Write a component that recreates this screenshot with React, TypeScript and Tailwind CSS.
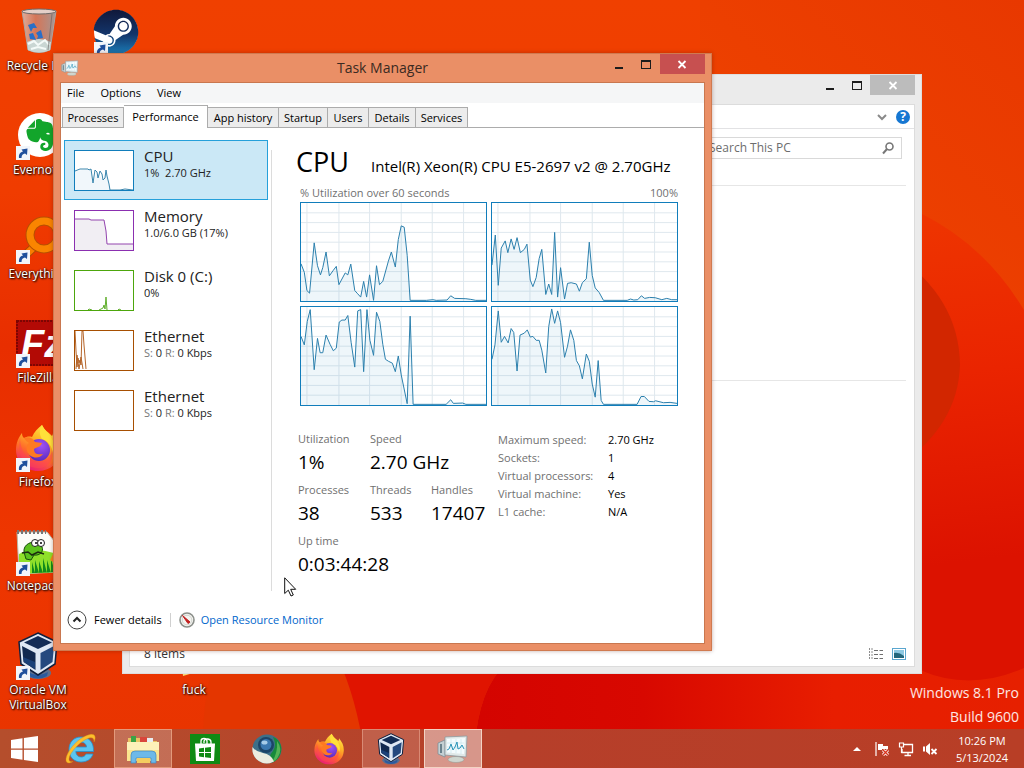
import { useState } from "react";
import type { ReactNode } from "react";
import { FaSteam } from "react-icons/fa";
import { SiEvernote } from "react-icons/si";

/* ---------- Icons ---------- */

function RecycleIcon() {
  return (
    <svg viewBox="0 0 48 48" className="size-12" aria-hidden="true">
      <defs>
        <linearGradient id="bin" x1="0" x2="1">
          <stop offset="0" stopColor="#d9d2cf" stopOpacity=".75" />
          <stop offset=".4" stopColor="#c98d7e" stopOpacity=".7" />
          <stop offset="1" stopColor="#9aa1a5" stopOpacity=".9" />
        </linearGradient>
      </defs>
      <path d="M8 3 L42 3 L36 42 Q25 47 14 42 Z" fill="url(#bin)" stroke="#a9a5a3" />
      <path d="M13 34 Q25 28 37 34 L36 42 Q25 47 14 42 Z" fill="#c9d6d3" />
      <path d="M14 36 L20 33 L24 37 L31 32 L35 37 M17 41 L24 39 L32 41" stroke="#f4faf8" strokeWidth="2" fill="none" />
      <path d="M14 17 L20 15 L23 20 L19 20 L17 24 Z M22 25 L27 22 L29 30 L23 31 L24 28 Z M15 26 L19 25 L22 32 L16 31 Z" fill="#2a6fc8" />
      <ellipse cx="25" cy="3.5" rx="17" ry="2.5" fill="#e4cfc8" stroke="#6f6a68" />
      <path d="M38 6 L34 42" stroke="#63605f" strokeWidth="1" opacity=".6" />
    </svg>
  );
}

function SteamIcon() {
  return (
    <svg viewBox="0 0 48 48" className="size-12" aria-hidden="true">
      <defs>
        <linearGradient id="steam" x1="0" x2="0" y1="0" y2="1">
          <stop offset="0" stopColor="#10183a" />
          <stop offset=".55" stopColor="#13356a" />
          <stop offset="1" stopColor="#1b7db8" />
        </linearGradient>
      </defs>
      <circle cx="24" cy="24" r="22" fill="#fff" />
      <FaSteam x={1} y={1} size={46} fill="url(#steam)" />
    </svg>
  );
}

function EvernoteIcon() {
  return (
    <svg viewBox="0 0 48 48" className="size-12" aria-hidden="true">
      <circle cx="26" cy="23" r="22" fill="#fff" />
      <SiEvernote x={10} y={7} size={32} fill="#12a52b" />
    </svg>
  );
}

function EverythingIcon() {
  return (
    <svg viewBox="0 0 48 48" className="size-12" aria-hidden="true">
      <path d="M20 31 L6 44" stroke="#b04a00" strokeWidth="9" strokeLinecap="round" />
      <path d="M20 31 L6 44" stroke="#fa7d00" strokeWidth="7" strokeLinecap="round" />
      <circle cx="30" cy="19" r="14" fill="none" stroke="#b85000" strokeWidth="9" />
      <circle cx="30" cy="19" r="14" fill="none" stroke="#fa8500" strokeWidth="7" />
    </svg>
  );
}

function FileZillaIcon() {
  return (
    <svg viewBox="0 0 48 48" className="size-12" aria-hidden="true">
      <rect x="2" width="46" height="46" fill="#b30a05" />
      <rect x="3" y="1" width="44" height="44" fill="none" stroke="#7d0502" strokeWidth="2" strokeDasharray="2 1" />
      <text x="7" y="37" fontFamily="Liberation Sans, sans-serif" fontWeight="700" fontStyle="italic" fontSize="38" fill="#fff">
        Fz
      </text>
    </svg>
  );
}

function FirefoxIcon({ className, id }: { className: string; id: string }) {
  return (
    <svg viewBox="0 0 48 48" className={className} aria-hidden="true">
      <defs>
        <linearGradient id={id} x1=".8" y1="0" x2=".3" y2="1">
          <stop offset="0" stopColor="#fff14d" />
          <stop offset=".35" stopColor="#ffb627" />
          <stop offset=".65" stopColor="#ff6a2a" />
          <stop offset="1" stopColor="#e8187c" />
        </linearGradient>
        <radialGradient id={id + "g"} cx=".6" cy=".3" r=".8">
          <stop offset="0" stopColor="#a052f5" />
          <stop offset="1" stopColor="#5226b8" />
        </radialGradient>
      </defs>
      <path d="M28 1 C30 7 35 8 38 12 C39 11 39 9 39 8 C44 14 47 20 46 28 C45 39 36 47 24 47 C12 47 2 38 2 26 C2 18 5 13 8 9 C8 12 9 13 10 14 C12 13 15 12 18 13 C20 8 24 4 28 1 Z" fill={"url(#" + id + ")"} />
      <path d="M28 1 C31 7 36 10 38 15 C41 20 41 25 39 29 C38 22 34 17 28 15 C25 10 25 5 28 1 Z" fill="#ffe03a" />
      <circle cx="25" cy="26" r="11" fill={"url(#" + id + "g)"} />
      <path d="M10 14 C14 12 19 14 21 18 L28 19 C27 23 23 23 20 25 C20 30 24 31 29 30 C25 36 15 34 13 27 C12 23 13 20 15 19 C13 18 11 16 10 14 Z" fill="#ff7a22" />
      <path d="M6 14 C6 22 10 36 22 38 C31 39 37 33 38 26 C41 36 33 45 23 44 C10 43 3 32 6 14 Z" fill="#ff4456" opacity=".5" />
    </svg>
  );
}

function NotepadIcon() {
  return (
    <svg viewBox="0 0 48 48" className="size-12" aria-hidden="true">
      <path d="M3 4 L33 4 L41 14 L45 44 L5 46 Z" fill="#fdfdf8" stroke="#b9b9a8" />
      <path d="M3 4 H32" stroke="#777" strokeWidth="4" strokeDasharray="2 2" />
      <path d="M5 26 Q20 18 42 26 L45 44 L5 46 Z" fill="#8fe02a" />
      <path d="M18 45 V34 L21 45 V32 L25 45 V33 L29 45 V30 L33 45 V32 L37 45 V31 L41 44 Z" fill="#128a1c" />
      <path d="M10 24 C9 16 18 13 24 14 L28 19 C30 23 26 28 20 27 L17 32 L12 31 Z" fill="#5cc11c" stroke="#174f0a" />
      <circle cx="21" cy="15" r="3.5" fill="#fff" stroke="#222" />
      <circle cx="27" cy="15" r="3.5" fill="#fff" stroke="#222" />
      <circle cx="22" cy="15" r="1" />
      <circle cx="27" cy="15" r="1" />
      <path d="M8 25 L14 24 L18 27 L24 24 L30 26" stroke="#1c2a10" fill="none" strokeWidth="1.5" />
      <path d="M36 32 L42 20 L45 22 L39 34 Z" fill="#ef8a1b" />
    </svg>
  );
}

function VirtualBoxIcon({ className }: { className: string }) {
  return (
    <svg viewBox="0 0 48 48" className={className} aria-hidden="true">
      <ellipse cx="24" cy="41" rx="13" ry="6" fill="#5e6f8d" />
      <path d="M14 40 Q24 46 34 40 L33 44 Q24 49 15 44 Z" fill="#2a5aa0" />
      <path d="M24 1 L43 10 L41 32 L24 43 L7 32 L5 10 Z" fill="#dfe8f4" stroke="#10203e" strokeWidth="1.5" />
      <path d="M24 4 L38 10.500 L24 17 L10 10.500 Z" fill="#132c55" />
      <path d="M8 14 L21.500 21 L21.500 38 L9.500 30 Z" fill="#12294f" />
      <path d="M40 14 L26.500 21 L26.500 38 L38.500 30 Z" fill="#25497e" />
      <path d="M9 25 L21 30 L21 37 L10 30 Z" fill="#1b4178" />
    </svg>
  );
}

function ShortcutArrow() {
  return (
    <svg viewBox="0 0 14 14" className="absolute bottom-0 left-0.5 size-3.5" aria-hidden="true">
      <rect width="14" height="14" fill="#f2f5fa" />
      <path d="M3 12 C2.500 8 4.500 6 7 5.500 L5.500 3.500 L11.500 2.500 L11 9 L9 7.500 C7 8 5.500 9 5.500 12 Z" fill="#1f4f9c" />
    </svg>
  );
}

function IEIcon() {
  return (
    <svg viewBox="0 0 32 32" className="size-8" aria-hidden="true">
      <path d="M16 4 C8.500 4 4 9.500 4 16.500 C4 24 9 29 16 29 C22 29 26.500 26 28 21 L21 21 C20 23 18.500 24 16.500 24 C13 24 11 22 10.800 18.500 L28.500 18.500 C29 10 24.500 4 16 4 Z M11 14 C11.500 11 13.500 9.300 16.300 9.300 C19.300 9.300 21.300 11 21.600 14 Z" fill="#5bc4f0" stroke="#2490cf" strokeWidth=".8" fillRule="evenodd" />
      <path d="M8 28.500 C4 31 .5 30.500 1 26 C2 18 13 4 25 1.500 C30 .5 31.500 4 29 9 C29.300 5.500 27.500 4 24 5 C15 8 4 20 4 26.500 C4 28.500 6 29 8 28.500 Z" fill="#fcbf2c" stroke="#e08a10" strokeWidth=".4" />
    </svg>
  );
}

function FolderIcon() {
  return (
    <svg viewBox="0 0 34 32" className="h-8 w-[34px]" aria-hidden="true">
      <path d="M2 5 H15 L17 8 H31 V27 H2 Z" fill="#e9c463" />
      <rect x="5" y="3" width="5" height="6" fill="#3aa346" />
      <rect x="14" y="4" width="7" height="5" fill="#d9463b" />
      <rect x="21" y="5" width="6" height="5" fill="#e8eef2" />
      <path d="M1 9 H33 V28 H1 Z" fill="#fbe48e" />
      <path d="M1 9 H33 V17 H1 Z" fill="#fdf1b9" />
      <path d="M5 30 V22 Q5 18 9 18 H26 Q30 18 30 22 V30 H25 V25 H10 V30 Z" fill="#6db9e8" stroke="#3f87bf" strokeWidth=".7" />
      <rect x="11" y="25" width="13" height="5" fill="#f4cd5f" />
    </svg>
  );
}

function StoreIcon() {
  return (
    <svg viewBox="0 0 30 30" className="size-[30px]" aria-hidden="true">
      <rect width="30" height="30" fill="#0f8a14" />
      <path d="M11 10 V7 Q11 4.500 14 4.500 Q17 4.500 17 7 V10 M14 9 V7 Q15 4.500 18 5 Q21 5.500 21 8 V10" fill="none" stroke="#fff" strokeWidth="1.300" />
      <path d="M5 9.500 H25 L24 27 H6 Z" fill="#fff" />
      <path d="M9 14.500 L14 13.800 V18 H9 Z M15 13.700 L21 13 V18 H15 Z M9 19 H14 V23.200 L9 22.500 Z M15 19 H21 V24 L15 23.300 Z" fill="#0f8a14" />
    </svg>
  );
}

function GlobeIcon() {
  return (
    <svg viewBox="0 0 32 32" className="size-8" aria-hidden="true">
      <circle cx="16" cy="16" r="14.500" fill="#3d6f88" />
      <path d="M22 4 Q28 6 30 13 A14.500 14.500 0 0 1 21 29.500 Q16 24 22 18 Q26 12 22 4 Z" fill="#178a3a" />
      <path d="M26 8 Q32 16 27 24 Q25 28 21 29 Q27 20 26 8 Z" fill="#54b355" />
      <circle cx="15" cy="12" r="8" fill="#1c4468" />
      <circle cx="15" cy="11.500" r="5.500" fill="#3a77b0" />
      <ellipse cx="13.500" cy="9.500" rx="3" ry="2" fill="#a6cbe8" />
      <path d="M1.500 14 Q5 19 12 20 Q20 21 23 28.500 A14.500 14.500 0 0 1 1.500 14 Z" fill="#ececdf" />
    </svg>
  );
}

function MonitorIcon({ className }: { className: string }) {
  return (
    <svg viewBox="0 0 32 28" className={className} aria-hidden="true">
      <ellipse cx="19" cy="24.500" rx="8" ry="3" fill="#cfd6cf" stroke="#8e9890" strokeWidth=".5" />
      <path d="M1 8 L8 5 V22 L1 19 Z" fill="#c4d0d3" stroke="#758a92" strokeWidth=".7" />
      <path d="M4 9 V18" stroke="#4d6975" strokeWidth="1.500" />
      <path d="M8 2 L30 1 L29 22 L8 20 Z" fill="#dfe8e8" stroke="#8d9aa0" strokeWidth=".8" />
      <path d="M10 4 L28 3 L27 19 L10 17.500 Z" fill="#f4fbfd" />
      <path d="M10 8 H27 M10 12 H27 M14 4 V18 M19 4 V18 M24 4 V19" stroke="#b9dfe9" strokeWidth=".5" />
      <path d="M10 15 L12 14 L14 9 L16 15 L18 12 L20 7 L21 14 L23 13 L25 10 L27 14" fill="none" stroke="#2a94b8" strokeWidth="1" />
    </svg>
  );
}

function WindowsLogo() {
  return (
    <svg viewBox="0 0 28 26" className="h-[26px] w-7" aria-hidden="true">
      <path d="M0 4 L11.500 2.300 V12.400 H0 Z M12.900 2.100 L27 0 V12.400 H12.900 Z M0 13.700 H11.500 V23.700 L0 22 Z M12.900 13.700 H27 V26 L12.900 23.900 Z" fill="#fff" />
    </svg>
  );
}

/* ---------- Wallpaper ---------- */

function Wallpaper() {
  return (
    <svg viewBox="0 0 1024 768" preserveAspectRatio="none" className="absolute inset-0 size-full" aria-hidden="true">
      <defs>
        <linearGradient id="base" x1="0" y1="0" x2="0" y2="1">
          <stop offset="0" stopColor="#f04000" />
          <stop offset=".25" stopColor="#f03c00" />
          <stop offset=".45" stopColor="#e82e00" />
          <stop offset=".7" stopColor="#ee3600" />
          <stop offset="1" stopColor="#e83400" />
        </linearGradient>
        <linearGradient id="ring" gradientUnits="userSpaceOnUse" x1="940" y1="220" x2="980" y2="560">
          <stop offset="0" stopColor="#ee3400" />
          <stop offset=".45" stopColor="#ea2400" />
          <stop offset="1" stopColor="#dc1200" />
        </linearGradient>
        <linearGradient id="corner" x1="0" y1="1" x2="1" y2="0">
          <stop offset="0" stopColor="#f04600" />
          <stop offset="1" stopColor="#e83800" />
        </linearGradient>
        <linearGradient id="low" gradientUnits="userSpaceOnUse" x1="480" y1="0" x2="1024" y2="0">
          <stop offset="0" stopColor="#d40400" />
          <stop offset=".3" stopColor="#d80800" />
          <stop offset=".65" stopColor="#e81e00" />
          <stop offset="1" stopColor="#e62000" />
        </linearGradient>
      </defs>
      <rect width="1024" height="768" fill="url(#base)" />
      <path d="M700 0 H1024 V330 Q980 250 920 213 L700 150 Z" fill="url(#corner)" />
      <path d="M700 180 Q830 170 920 213 Q985 245 1024 310 V768 H700 Z" fill="url(#ring)" />
      <path d="M880 245 Q959 290 960 365 Q958 425 900 465 Z" fill="#d22600" />
      <path d="M212 670 H345 Q360 700 366 768 H204 Q200 710 212 670 Z" fill="#e43600" />
      <path d="M343 670 H500 Q474 700 474 768 H366 Q360 712 343 670 Z" fill="#e01400" />
      <path d="M500 670 H920 Q970 692 1024 668 V768 H474 Q474 700 500 670 Z" fill="url(#low)" />
    </svg>
  );
}

/* ---------- Desktop shortcuts ---------- */

type DesktopItem = { label: string; icon: ReactNode; linked: boolean; place: string };

const desktopItems: DesktopItem[] = [
  { label: "Recycle Bin", icon: <RecycleIcon />, linked: false, place: "col-start-1 row-start-1" },
  { label: "Evernote", icon: <EvernoteIcon />, linked: true, place: "col-start-1 row-start-2" },
  { label: "Everything", icon: <EverythingIcon />, linked: true, place: "col-start-1 row-start-3" },
  { label: "FileZilla", icon: <FileZillaIcon />, linked: true, place: "col-start-1 row-start-4" },
  { label: "Firefox", icon: <FirefoxIcon className="size-12" id="ffd" />, linked: true, place: "col-start-1 row-start-5" },
  { label: "Notepad++", icon: <NotepadIcon />, linked: true, place: "col-start-1 row-start-6" },
  { label: "Oracle VM VirtualBox", icon: <VirtualBoxIcon className="size-12" />, linked: true, place: "col-start-1 row-start-7" },
  { label: "Steam", icon: <SteamIcon />, linked: true, place: "col-start-2 row-start-1" },
  {
    label: "fuck",
    icon: (
      <svg viewBox="0 0 48 48" className="size-12" aria-hidden="true">
        <path d="M9 6 H20 L23 10 H40 V36 L13 44 Z" fill="#f7d774" />
      </svg>
    ),
    linked: false,
    place: "col-start-3 row-start-7",
  },
];

function DesktopIcons() {
  return (
    <div className="relative grid auto-cols-[78px] grid-rows-[repeat(7,104px)] justify-start">
      {desktopItems.map((s) => (
        <button key={s.label} type="button" className={"flex w-[76px] flex-col items-center gap-0.5 px-1 pt-2 " + s.place}>
          <span className="relative">
            {s.icon}
            {s.linked && <ShortcutArrow />}
          </span>
          <span className="text-center text-[12px] leading-[15px] text-white [text-shadow:1px_1px_2px_#000,0_0_2px_#000]">{s.label}</span>
        </button>
      ))}
    </div>
  );
}

/* ---------- Window controls ---------- */

function WindowControls({ close }: { close: string }) {
  return (
    <div className="flex items-start">
      <button type="button" aria-label="Minimize" className="flex h-[21px] w-[27px] items-center justify-center">
        <svg viewBox="0 0 12 12" className="size-3" aria-hidden="true">
          <path d="M2 9 H10" stroke="#1c1c1c" strokeWidth="2" />
        </svg>
      </button>
      <button type="button" aria-label="Maximize" className="flex h-[21px] w-[27px] items-center justify-center">
        <svg viewBox="0 0 12 12" className="size-3" aria-hidden="true">
          <rect x="1.500" y="2.500" width="9" height="7" fill="none" stroke="#1c1c1c" />
          <path d="M1 2 H11" stroke="#1c1c1c" strokeWidth="2" />
        </svg>
      </button>
      <button type="button" aria-label="Close" className={"flex h-[20px] w-[45px] items-center justify-center " + close}>
        <svg viewBox="0 0 12 12" className="size-3" aria-hidden="true">
          <path d="M2.500 3 L9.500 10 M9.500 3 L2.500 10" stroke="#fff" strokeWidth="1.800" />
        </svg>
      </button>
    </div>
  );
}

/* ---------- Explorer window ---------- */

function ExplorerWindow() {
  return (
    <section className="absolute top-[74px] left-[122px] flex h-[600px] w-[800px] flex-col border border-[#dedede] bg-[#ebebeb] px-1.5 pb-1.5" aria-label="This PC">
      <header className="flex h-[29px] justify-end">
        <WindowControls close="bg-[#bcbcbc]" />
      </header>
      <div className="flex min-h-0 flex-1 flex-col border border-[#dcdcdc] bg-white">
        <div className="flex h-6 items-center justify-end gap-2 border-b border-[#e2e2e4] pr-1">
          <button type="button" aria-label="Expand the ribbon">
            <svg viewBox="0 0 12 12" className="size-3" aria-hidden="true">
              <path d="M2 4 L6 8 L10 4" fill="none" stroke="#8a8a8a" strokeWidth="2" />
            </svg>
          </button>
          <button type="button" aria-label="Help" className="flex size-3.5 items-center justify-center rounded-full bg-[#1677d2] text-[12px] leading-none font-bold text-white">
            ?
          </button>
        </div>
        <div className="flex justify-end py-2 pr-3">
          <div className="flex h-[22px] w-[200px] items-center border border-[#d9d9d9] px-1.5">
            <input
              type="search"
              aria-label="Search This PC"
              placeholder="Search This PC"
              className="min-w-0 flex-1 text-[12px] leading-4 text-[#444] outline-none placeholder:text-[#6d6d6d]"
            />
            <svg viewBox="0 0 14 14" className="size-3.5" aria-hidden="true">
              <circle cx="8.500" cy="5.500" r="3.500" fill="none" stroke="#777" strokeWidth="1.600" />
              <path d="M6 8 L2 12.500" stroke="#777" strokeWidth="2" />
            </svg>
          </div>
        </div>
        <div className="flex flex-1 flex-col px-2 pt-[18px]">
          <div className="h-[195px] border-t border-[#e6e6e6]" />
          <div className="flex-1 border-t border-[#e6e6e6]" />
        </div>
        <footer className="flex h-6 items-center justify-between pr-2 pl-3.5">
          <span className="text-[12px] text-[#333]">8 items</span>
          <span className="flex gap-2">
            <button type="button" aria-label="Details view">
              <svg viewBox="0 0 16 14" className="h-3.5 w-4" aria-hidden="true">
                <path d="M1.500 1 V13 M4 1 V13" stroke="#8e8e8e" strokeDasharray="2 1" />
                <path d="M6 3.500 H10 M11.500 3.500 H15 M6 7.500 H10 M11.500 7.500 H15 M6 11.500 H10 M11.500 11.500 H15" stroke="#6f6f6f" />
              </svg>
            </button>
            <button type="button" aria-label="Large icons view">
              <svg viewBox="0 0 14 14" className="size-3.5" aria-hidden="true">
                <rect x=".5" y="1.500" width="13" height="11" fill="#fff" stroke="#5aa6cf" />
                <rect x="2" y="3" width="10" height="8" fill="#8cc8e2" />
                <path d="M2 6 Q7 5 12 9 V11 H2 Z" fill="#22667c" />
              </svg>
            </button>
          </span>
        </footer>
      </div>
    </section>
  );
}

/* ---------- Task Manager ---------- */

const cores = [
  {
    id: "cpu0",
    points:
      "0,186 10,212 18,268 26,276 40,122 50,192 59,220 66,198 76,150 86,223 98,206 107,194 115,250 134,214 142,220 151,187 163,268 172,278 181,288 190,240 199,288 208,220 220,298 229,192 238,250 248,240 265,178 274,150 286,196 295,112 304,70 313,74 322,160 331,298 380,298 400,296 410,298 443,297 454,284 466,292 500,293 515,295 530,298 561,298",
  },
  {
    id: "cpu1",
    points:
      "0,190 10,98 19,252 28,138 40,116 48,152 58,110 67,142 76,106 86,152 98,142 106,126 116,236 124,256 134,228 143,170 151,142 163,280 172,248 181,280 190,90 199,288 208,198 220,294 229,246 240,244 256,248 265,270 274,244 286,232 295,120 304,222 313,260 325,274 338,298 410,298 420,294 430,297 442,296 453,284 463,292 478,289 495,290 515,296 530,292 545,296 561,296",
  },
  {
    id: "cpu2",
    points:
      "0,90 10,116 19,44 28,8 40,192 50,96 58,140 66,140 76,86 88,114 98,134 107,126 116,46 124,40 134,40 142,26 152,108 163,184 172,12 181,8 190,198 200,8 209,102 220,148 229,16 239,44 248,114 256,160 265,166 277,172 286,198 295,150 304,208 322,296 331,28 340,298 440,298 454,284 462,295 490,294 500,298 561,298",
  },
  {
    id: "cpu3",
    points:
      "0,160 9,116 19,12 28,108 38,90 49,110 58,66 66,78 76,196 85,86 98,80 107,70 116,92 124,90 134,102 143,102 151,132 163,202 172,60 181,6 190,50 199,12 208,48 220,154 229,120 238,70 248,102 256,164 265,180 274,220 286,144 295,166 304,236 313,276 322,164 331,286 338,298 440,298 452,274 462,274 476,289 490,290 496,287 520,293 540,292 561,295",
  },
];

const gridRows = [30, 60, 90, 120, 150, 180, 210, 240, 270];
const gridCols = [18, 115, 208, 304, 398, 493];

function CoreChart({ points }: { points: string }) {
  return (
    <svg viewBox="0 0 561 300" preserveAspectRatio="none" className="h-[100px] w-full border border-[#117dbb] bg-white" aria-hidden="true">
      {gridRows.map((y) => (
        <path key={y} d={"M0 " + y + " H561"} stroke="#dfe8ee" strokeWidth="1" vectorEffect="non-scaling-stroke" />
      ))}
      {gridCols.map((x) => (
        <path key={x} d={"M" + x + " 0 V300"} stroke="#dfe8ee" strokeWidth="1" vectorEffect="non-scaling-stroke" />
      ))}
      <polygon points={"0,300 " + points + " 561,300"} fill="#117dbb" fillOpacity=".07" />
      <polyline points={points} fill="none" stroke="#2b7fad" strokeWidth="1" vectorEffect="non-scaling-stroke" />
    </svg>
  );
}

type Device = { id: string; name: string; detail: ReactNode; border: string; chart: ReactNode };

const rate = (
  <>
    <span className="text-[#777]">S:</span> 0 <span className="text-[#777]">R:</span> 0 Kbps
  </>
);

const devices: Device[] = [
  {
    id: "cpu",
    name: "CPU",
    detail: <>1%&nbsp; 2.70 GHz</>,
    border: "border-[#117dbb]",
    chart: (
      <>
        <path d="M0 20 L5 18 L13 18 L14 19 L16 18 L18 32 L20 19 L22 21 L23 27 L25 20 L27 23 L28 29 L30 27 L31 19 L32 25 L34 33 L35 39 H45 L50 38 L58 39" fill="none" stroke="#3b86ad" />
        <path d="M0 20 L16 18 L18 32 L22 21 L28 29 L31 19 L35 39 H0 Z" fill="#117dbb" fillOpacity=".06" />
      </>
    ),
  },
  {
    id: "memory",
    name: "Memory",
    detail: "1.0/6.0 GB (17%)",
    border: "border-[#8b2fb0]",
    chart: <path d="M-1 8 L14 8 L16 9 L29 9 L31 20 L32 33 H60 V41 H-1 Z" fill="#f1eef3" stroke="#9344ae" />,
  },
  {
    id: "disk",
    name: "Disk 0 (C:)",
    detail: "0%",
    border: "border-[#4da60c]",
    chart: <path d="M13 39 L14 38 L17 39 M24 39 L28 37 L29 34 L30 38 L31 26 L32 39 M43 39 L44 38 L46 39" fill="none" stroke="#5fae2b" />,
  },
  {
    id: "ethernet-1",
    name: "Ethernet",
    detail: rate,
    border: "border-[#a74f01]",
    chart: <path d="M0 0 L1 20 L2 36 L3 27 L4 32 L5 29 L6 34 L7 0 L8 0 L9 14 L11 38 M1 38 L2 24 L4 38 L6 26 L8 38" fill="none" stroke="#b5652a" />,
  },
  { id: "ethernet-2", name: "Ethernet", detail: rate, border: "border-[#a74f01]", chart: null },
];

const tabs = [
  { name: "Processes", width: "w-[62px]" },
  { name: "Performance", width: "w-[84px]" },
  { name: "App history", width: "w-[71px]" },
  { name: "Startup", width: "w-[49px]" },
  { name: "Users", width: "w-[41px]" },
  { name: "Details", width: "w-[47px]" },
  { name: "Services", width: "w-[52px]" },
];

const specs = [
  ["Maximum speed:", "2.70 GHz"],
  ["Sockets:", "1"],
  ["Virtual processors:", "4"],
  ["Virtual machine:", "Yes"],
  ["L1 cache:", "N/A"],
];

function Stat({ label, value }: { label: string; value: string }) {
  return (
    <div className="h-[51px]">
      <dt className="text-[11px] leading-4 text-[#707070]">{label}</dt>
      <dd className="text-[19px] leading-[30px] whitespace-nowrap">{value}</dd>
    </div>
  );
}

function TaskManagerWindow() {
  const [tab, setTab] = useState("Performance");
  const [device, setDevice] = useState("cpu");
  return (
    <section className="absolute top-[53px] left-[53px] flex h-[598px] w-[659px] flex-col border border-[#d07a50] bg-[#ea8f66] px-1.5 pb-1.5 shadow-[0_0_4px_rgba(80,20,0,0.35)]" aria-label="Task Manager">
      <header className="flex h-7 items-start justify-between">
        <MonitorIcon className="mt-1.5 ml-px h-4 w-[18px]" />
        <h1 className="ml-20 self-center text-[14px] leading-5 text-[#3a2a22]">Task Manager</h1>
        <WindowControls close="bg-[#c75050]" />
      </header>
      <div className="flex min-h-0 flex-1 flex-col border border-[#c9774f] bg-white">
        <nav className="flex h-[20px] items-center gap-4 bg-[#f5f6f7] px-1.5 text-[11px]">
          <button type="button">File</button>
          <button type="button">Options</button>
          <button type="button">View</button>
        </nav>
        <div role="tablist" className="flex h-[25px] items-end border-b border-[#acacac] px-px text-[11px]">
          {tabs.map((t) => (
            <button
              key={t.name}
              type="button"
              role="tab"
              aria-selected={t.name === tab}
              onClick={() => setTab(t.name)}
              className={
                t.name === tab
                  ? "-mb-px h-[23px] border border-b-0 border-l-0 border-[#acacac] bg-white pb-0.5 leading-none " + t.width
                  : "h-[20px] border border-b-0 border-l-0 border-[#acacac] bg-[#ececec] leading-none first:border-l " + t.width
              }
            >
              {t.name}
            </button>
          ))}
        </div>
        <div className="flex min-h-0 flex-1 pt-3">
          <div className="flex w-[210px] flex-col pl-[3px]">
            {devices.map((d) => (
              <button
                key={d.id}
                type="button"
                onClick={() => setDevice(d.id)}
                className={"flex h-[60px] w-[204px] gap-2.5 border pt-[9px] pl-[9px] text-left " + (d.id === device ? "border-[#26a0da] bg-[#cbe8f6]" : "border-transparent")}
              >
                <svg viewBox="0 0 58 39" className={"h-[41px] w-[60px] border bg-white " + d.border} aria-hidden="true">
                  {d.chart}
                </svg>
                <span className="-mt-0.5 flex flex-col">
                  <span className="text-[15px] leading-[17px] text-[#222]">{d.name}</span>
                  <span className="text-[11px] leading-4 text-[#222]">{d.detail}</span>
                </span>
              </button>
            ))}
          </div>
          <div className="mt-2.5 mb-1.5 w-px bg-[#dcdcdc]" />
          <article className="flex flex-1 flex-col pr-[26px] pl-6">
            <header className="flex items-baseline">
              <h2 className="w-[75px] text-[27px] leading-[44px]">CPU</h2>
              <p className="text-[15px] whitespace-nowrap">Intel(R) Xeon(R) CPU E5-2697 v2 @ 2.70GHz</p>
            </header>
            <div className="flex justify-between pl-1 text-[11px] leading-[18px] text-[#707070]">
              <span>% Utilization over 60 seconds</span>
              <span>100%</span>
            </div>
            <div className="grid grid-cols-2 gap-1 pl-1">
              {cores.map((c) => (
                <CoreChart key={c.id} points={c.points} />
              ))}
            </div>
            <div className="flex pt-[25px] pl-0.5">
              <dl className="grid w-[200px] grid-cols-[72px_61px_1fr]">
                <Stat label="Utilization" value="1%" />
                <div className="col-span-2">
                  <Stat label="Speed" value="2.70 GHz" />
                </div>
                <Stat label="Processes" value="38" />
                <Stat label="Threads" value="533" />
                <Stat label="Handles" value="17407" />
                <div className="col-span-3">
                  <Stat label="Up time" value="0:03:44:28" />
                </div>
              </dl>
              <dl className="text-[11px] leading-[18px]">
                {specs.map(([k, v]) => (
                  <div key={k} className="flex">
                    <dt className="w-[110px] text-[#707070]">{k}</dt>
                    <dd>{v}</dd>
                  </div>
                ))}
              </dl>
            </div>
          </article>
        </div>
        <footer className="flex h-[46px] items-center pl-1.5 text-[11px]">
          <button type="button" className="flex items-center gap-[7px]">
            <svg viewBox="0 0 20 20" className="size-5" aria-hidden="true">
              <circle cx="10" cy="10" r="9" fill="#fff" stroke="#444" />
              <path d="M6.500 11.500 L10 8 L13.500 11.500" fill="none" stroke="#222" strokeWidth="2" />
            </svg>
            Fewer details
          </button>
          <span className="mx-2 h-3.5 w-px bg-[#d0d0d0]" />
          <a href="#resource-monitor" className="flex items-center gap-1.5 text-[#0066cc]">
            <svg viewBox="0 0 16 16" className="size-4" aria-hidden="true">
              <circle cx="8" cy="8" r="7" fill="#f4f4f0" stroke="#8b8f8a" strokeWidth="1.600" />
              <circle cx="8" cy="8" r="4.800" fill="none" stroke="#c9ccc6" strokeWidth=".8" />
              <path d="M3.500 3.500 L11 10 L9 11.500 Z" fill="#c22020" stroke="#c22020" />
            </svg>
            Open Resource Monitor
          </a>
        </footer>
      </div>
    </section>
  );
}

/* ---------- Taskbar ---------- */

const taskButtons = [
  { label: "Internet Explorer", icon: <IEIcon />, look: "border-transparent" },
  { label: "File Explorer", icon: <FolderIcon />, look: "border-[#e39a7c] bg-white/20" },
  { label: "Store", icon: <StoreIcon />, look: "border-transparent" },
  { label: "Web browser", icon: <GlobeIcon />, look: "border-transparent" },
  { label: "Firefox", icon: <FirefoxIcon className="size-8" id="fft" />, look: "border-transparent" },
  { label: "VirtualBox", icon: <VirtualBoxIcon className="size-8" />, look: "border-[#d98a75] bg-white/15" },
  { label: "Task Manager", icon: <MonitorIcon className="h-7 w-8" />, look: "border-[#f3d3c4] bg-white/45" },
];

function Taskbar() {
  return (
    <footer className="relative flex h-[39px] items-stretch bg-linear-to-r from-[#b54e2c] via-[#b63f2a] to-[#b83e26]">
      <button type="button" aria-label="Start" className="flex w-[52px] items-center justify-center pr-0.5">
        <WindowsLogo />
      </button>
      <div className="flex gap-1">
        {taskButtons.map((b) => (
          <button key={b.label} type="button" aria-label={b.label} className={"flex w-[58px] items-center justify-center border " + b.look}>
            {b.icon}
          </button>
        ))}
      </div>
      <div className="ml-auto flex items-center gap-2 text-white">
        <button type="button" aria-label="Show hidden icons" className="mr-1">
          <svg viewBox="0 0 10 10" className="size-2.5" aria-hidden="true">
            <path d="M1 7 L5 3 L9 7 Z" fill="#fff" />
          </svg>
        </button>
        <button type="button" aria-label="Action Center">
          <svg viewBox="0 0 16 16" className="size-4" aria-hidden="true">
            <path d="M2 1 V15" stroke="#fff" strokeWidth="1.200" />
            <path d="M4 3 H9 V5 H14 V8 H8 V9 H4 Z" fill="#fff" />
            <path d="M9 9 L14 14 M14 9 L9 14" stroke="#fff" strokeWidth="3" />
            <path d="M9 9 L14 14 M14 9 L9 14" stroke="#d8321c" strokeWidth="1.400" />
          </svg>
        </button>
        <button type="button" aria-label="Network">
          <svg viewBox="0 0 16 16" className="size-4" aria-hidden="true">
            <path d="M6 3.500 H14.500 V11.500 H4 V8 M10 11.500 V14 M6.500 14.500 H13" fill="none" stroke="#fff" strokeWidth="1.300" />
            <path d="M1.500 2 H5.500 V6 H1.500 Z M3.500 6 V12" fill="none" stroke="#fff" strokeWidth="1.200" />
          </svg>
        </button>
        <button type="button" aria-label="Volume muted">
          <svg viewBox="0 0 16 16" className="size-4" aria-hidden="true">
            <path d="M1 5.500 H3 V10.500 H1 Z M4 5.500 L8 2 V14 L4 10.500 Z" fill="#fff" />
            <path d="M9.500 8 L14.500 13 M14.500 8 L9.500 13" stroke="#fff" strokeWidth="1.800" />
          </svg>
        </button>
        <time className="mr-4 ml-2.5 text-center text-[11px] leading-[17px]">
          10:26 PM
          <br />
          5/13/2024
        </time>
      </div>
    </footer>
  );
}

export default function App() {
  return (
    <div className="relative flex min-h-screen flex-col overflow-hidden bg-[#e83400] font-['Open_Sans','Noto_Sans',sans-serif] text-black">
      <Wallpaper />
      <main className="relative h-0 flex-1">
        <DesktopIcons />
        <p className="absolute right-[5px] bottom-0 text-right text-[14px] leading-6 text-white/90">
          Windows 8.1 Pro
          <br />
          Build 9600
        </p>
        <ExplorerWindow />
        <TaskManagerWindow />
        <svg viewBox="0 0 13 20" className="absolute top-[577px] left-[284px] h-5 w-[13px]" aria-hidden="true">
          <path d="M.7 .8 V16.500 L4.300 13.200 L7 19 L9.300 18 L6.700 12.300 H11.700 Z" fill="#fff" stroke="#111" strokeWidth="1" />
        </svg>
      </main>
      <Taskbar />
    </div>
  );
}
